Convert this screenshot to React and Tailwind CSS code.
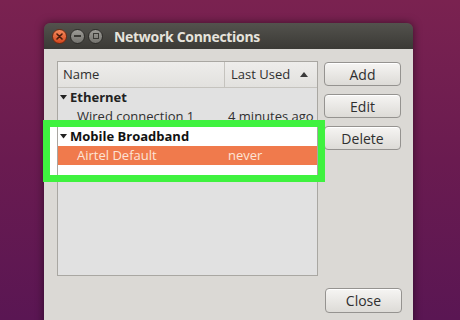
import React from 'react';

const font = { fontFamily: '"Open Sans", "DejaVu Sans", sans-serif' };

function TitleButton({ kind }) {
    if (kind === 'close') {
        return (
            <div className="w-[15px] h-[15px] rounded-full bg-gradient-to-b from-[#f68a5c] to-[#d4461c] border border-[#6e2a12] flex items-center justify-center">
                <svg width="7" height="7" viewBox="0 0 7 7">
                    <path d="M1 1L6 6M6 1L1 6" stroke="#4a1c0c" strokeWidth="1.6" strokeLinecap="round" />
                </svg>
            </div>
        );
    }
    return (
        <div className="w-[15px] h-[15px] rounded-full bg-gradient-to-b from-[#9c9b96] to-[#75746f] border border-[#2e2d2a] flex items-center justify-center">
            {kind === 'min' ? (
                <div className="w-[7px] h-[2px] bg-[#3a3935]" />
            ) : (
                <div className="w-[6px] h-[6px] border-[1.5px] border-[#3a3935]" />
            )}
        </div>
    );
}

function Button({ children, className = '' }) {
    return (
        <div className={`h-[24px] w-[77px] rounded-[4px] border border-[#959390] bg-gradient-to-b from-[#f6f5f3] to-[#dddbd7] shadow-[inset_0_1px_0_#fff] flex items-center justify-center text-[14px] text-[#2f2f2f] ${className}`}>
            {children}
        </div>
    );
}

function Caret() {
    return (
        <svg width="7" height="5" viewBox="0 0 7 5" className="mr-[3px]">
            <path d="M0 0H7L3.5 4.5Z" fill="#222" />
        </svg>
    );
}

export default function App() {
    return (
        <div style={font} className="relative w-[460px] h-[320px] overflow-hidden bg-gradient-to-b from-[#7a2250] via-[#6a1b50] to-[#5a1653]">
            <div className="pt-[23px] pl-[44px]">
                <div className="w-[369px] h-[320px] shadow-[0_0_8px_rgba(0,0,0,0.5)] rounded-t-[6px] overflow-hidden">
                    {/* title bar */}
                    <div className="h-[26px] bg-gradient-to-b from-[#53524d] to-[#3b3a36] flex items-center pl-[8px]">
                        <div className="flex items-center gap-[3px]">
                            <TitleButton kind="close" />
                            <TitleButton kind="min" />
                            <TitleButton kind="max" />
                        </div>
                        <span className="ml-[11px] text-[14px] font-bold tracking-[-0.3px] text-[#e6e3dc]">Network Connections</span>
                    </div>

                    {/* body */}
                    <div className="bg-[#dbd9d5] h-full pl-[13px] pt-[12px]">
                        <div className="flex gap-[6px]">
                            <div className="w-[261px] h-[215px] border border-[#a9a7a2] bg-[#e1e1e1] text-[13px] text-[#2f2f2f]">
                                <div className="flex h-[26px] border-b border-[#c5c3be] bg-gradient-to-b from-[#eeedeb] to-[#e2e1de]">
                                    <div className="w-[167px] border-r border-[#c5c3be] flex items-center pl-[5px]">Name</div>
                                    <div className="flex-1 flex items-center pl-[6px]">
                                        Last Used
                                        <svg width="8" height="5" viewBox="0 0 8 5" className="ml-[10px]">
                                            <path d="M0 5H8L4 0Z" fill="#3a3a3a" />
                                        </svg>
                                    </div>
                                </div>
                                <div className="h-[19px] flex items-center pl-[2px] font-bold text-[#222]">
                                    <Caret />Ethernet
                                </div>
                                <div className="h-[20px] flex items-center">
                                    <span className="w-[170px] pl-[19px]">Wired connection 1</span>
                                    <span>4 minutes ago</span>
                                </div>
                                <div className="h-[19px] flex items-center pl-[2px] font-bold text-[#111] bg-white">
                                    <Caret />Mobile Broadband
                                </div>
                                <div className="h-[19px] flex items-center bg-[#f07a4c] text-[#fde4d6]">
                                    <span className="w-[170px] pl-[19px]">Airtel Default</span>
                                    <span>never</span>
                                </div>
                                <div className="h-[10px] bg-white" />
                            </div>
                            <div className="flex flex-col gap-[8px] pt-[1px]">
                                <Button>Add</Button>
                                <Button>Edit</Button>
                                <Button>Delete</Button>
                            </div>
                        </div>
                        <div className="flex justify-end pr-[11px] mt-[12px]">
                            <Button className="h-[25px] w-[76px]">Close</Button>
                        </div>
                    </div>
                </div>
            </div>

            {/* annotation box */}
            <div className="absolute left-[43px] top-[120px] w-[282px] h-[62px] border-[7px] border-[#3ff23f] shadow-[inset_7px_0_0_#fff]" />
        </div>
    );
}
